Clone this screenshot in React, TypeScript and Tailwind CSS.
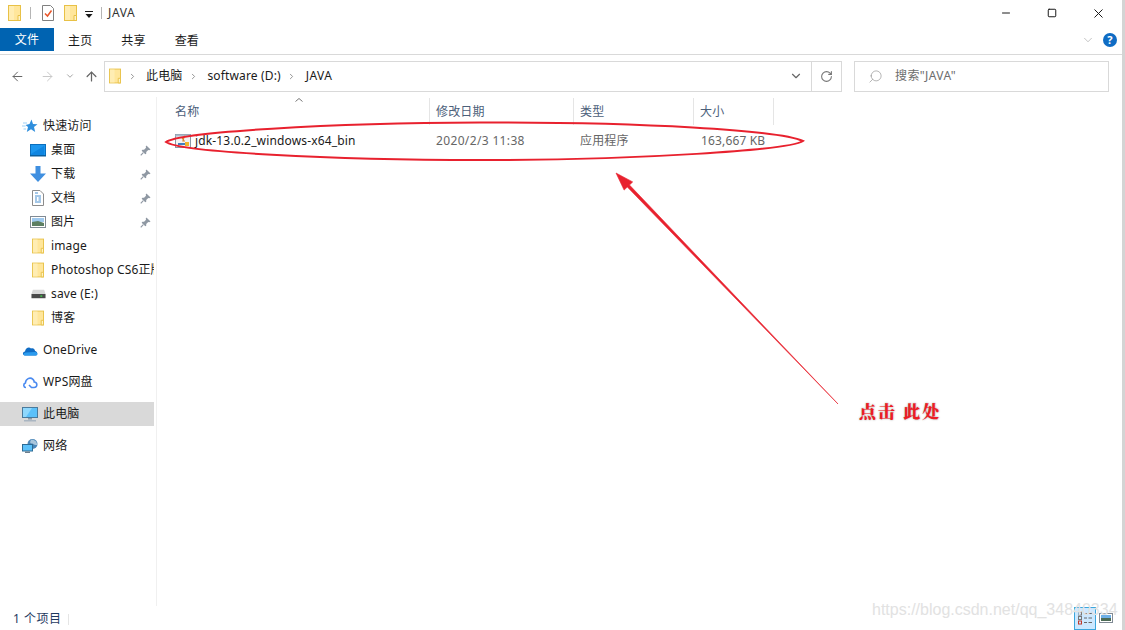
import React from "react";
import { ArrowLeft, ArrowRight, ArrowUp, ChevronDown, ChevronRight, RotateCw, Search, Minus, X, Square } from "lucide-react";

function Folder({ className = "w-[13px] h-[16px]" }: { className?: string }) {
  return (
    <svg viewBox="0 0 13 16" className={className}>
      <rect x="0.5" y="0.5" width="12" height="15" fill="#ffe69b" stroke="#e8c146" />
      <rect x="1" y="1" width="5" height="14" fill="#ffedb3" />
      <path d="M10 15.5V10.5H12.5V15.5Z" fill="#fff3c6" stroke="#e8c146" />
    </svg>
  );
}

function Pin() {
  return (
    <svg viewBox="0 0 12 12" className="w-[11px] h-[11px]">
      <path d="M7 0.5 11.5 5 10 5.8 9 5.4 6.8 7.6 6.8 9.6 5.8 10.2 1.8 6.2 2.6 5.2 4.4 5.2 6.6 3 6.2 2Z" fill="#8f98a3" />
      <path d="M3.6 8.4 0.8 11.2" stroke="#8f98a3" strokeWidth="1.2" />
    </svg>
  );
}

function Crumb() {
  return (
    <span className="w-[4px] flex justify-center">
      <ChevronRight size={9} strokeWidth={2.4} className="shrink-0 text-[#8a8a8a]" />
    </span>
  );
}

const iconBox = "w-[16px] h-[16px]";

const icons: Record<string, React.ReactNode> = {
  star: (
    <svg viewBox="0 0 16 16" className={iconBox}>
      <path d="M9.5 1.5 11 6 15.5 6.2 12 9 13.2 14 9 11.2 4.8 14 6 9 3.5 7 7.5 6Z" fill="#2f8fdd" />
      <path d="M1 5H5M0 8H3.5M1.5 11H4" stroke="#9ccff5" strokeWidth="1" />
    </svg>
  ),
  desktop: (
    <svg viewBox="0 0 16 13" className="w-[16px] h-[13px]">
      <rect x="0.5" y="0.5" width="15" height="11" fill="#1c96ee" stroke="#0b6fbd" />
      <path d="M1 11V10L14 2V11Z" fill="#0f85e0" />
      <rect x="0" y="11" width="16" height="1.5" fill="#0b5f9e" />
    </svg>
  ),
  download: (
    <svg viewBox="0 0 16 16" className={iconBox}>
      <path d="M5.5 0H10.5V7.5H16L8 16 0 7.5H5.5Z" fill="#3f8fe0" />
    </svg>
  ),
  doc: (
    <svg viewBox="0 0 12 16" className="w-[12px] h-[16px]">
      <path d="M0.5 0.5H8L11.5 4V15.5H0.5Z" fill="#fff" stroke="#8c8c8c" />
      <path d="M3 3H6M3 6H9M3 8H5M6.5 8H9M3 10H5M6.5 10H9M3 12H9" stroke="#4a90d0" strokeWidth="1" />
    </svg>
  ),
  picture: (
    <svg viewBox="0 0 16 12" className="w-[16px] h-[12px]">
      <rect x="0.5" y="0.5" width="15" height="11" fill="#fff" stroke="#808a94" />
      <rect x="2" y="2" width="12" height="4" fill="#9fc9ee" />
      <path d="M2 6 8 5 14 7V10H2Z" fill="#5d7f62" />
    </svg>
  ),
  drive: (
    <svg viewBox="0 0 16 10" className="w-[15px] h-[10px]">
      <path d="M2 0.5H14L15.5 5H0.5Z" fill="#d8d8d8" />
      <rect x="0.5" y="5" width="15" height="4.5" fill="#4a4a4a" />
      <rect x="10" y="6.5" width="2" height="1.5" fill="#3fd24a" />
    </svg>
  ),
  onedrive: (
    <svg viewBox="0 0 16 11" className="w-[16px] h-[11px]">
      <path d="M3 10.5C0.5 10.5 0 7 3 6.5 3.5 3 7 1.5 9 3.5 11.5 2.5 13 4.5 13 6 15.5 6 16.5 10.5 13.5 10.5Z" fill="#0f6cc4" />
      <path d="M3 10.5C1 10.5 1 8 4 7.5L13 7C15.5 7 16.5 10.5 13.5 10.5Z" fill="#2b9bee" />
    </svg>
  ),
  wps: (
    <svg viewBox="0 0 16 13" className="w-[16px] h-[13px]" fill="none">
      <path d="M4 11.5C1.5 11.5 0.8 8 3.4 7 3.6 3 8 0.6 11 3.4 12 4.4 12.2 5.5 12.2 6 15.5 6.2 16 11.5 12 11.5H9.5L7 9" stroke="#4a8af0" strokeWidth="1.6" />
    </svg>
  ),
  pc: (
    <svg viewBox="0 0 16 15" className="w-[16px] h-[15px]">
      <rect x="0.5" y="0.5" width="15" height="10" fill="#5cc1fa" stroke="#4a7a9c" />
      <path d="M1 1H10L4 10H1Z" fill="#8fd8fd" />
      <rect x="6" y="11" width="4" height="1.5" fill="#8a9aa8" />
      <rect x="2" y="13" width="12" height="1.5" fill="#aab6c2" />
    </svg>
  ),
  network: (
    <svg viewBox="0 0 16 15" className="w-[16px] h-[15px]">
      <circle cx="10.5" cy="5" r="5" fill="#4a86b8" />
      <path d="M9 1C7.5 3 8 5 10.5 4.5 12 6 13 6 15 6 15.5 3 12 0 9 1Z" fill="#a9c6dc" />
      <rect x="0.5" y="5.5" width="10" height="6.5" fill="#5cc1fa" stroke="#2d6b94" />
      <rect x="3" y="12.5" width="5" height="1.5" fill="#6d7f8e" />
    </svg>
  ),
};

type NavItem = { label: string; icon: React.ReactNode; pin?: boolean; indent?: boolean; selected?: boolean };

const quick: NavItem[] = [
  { label: "快速访问", icon: icons.star },
  { label: "桌面", icon: icons.desktop, pin: true, indent: true },
  { label: "下载", icon: icons.download, pin: true, indent: true },
  { label: "文档", icon: icons.doc, pin: true, indent: true },
  { label: "图片", icon: icons.picture, pin: true, indent: true },
  { label: "image", icon: <Folder className="w-[12px] h-[16px]" />, indent: true },
  { label: "Photoshop CS6正版", icon: <Folder className="w-[12px] h-[16px]" />, indent: true },
  { label: "save (E:)", icon: icons.drive, indent: true },
  { label: "博客", icon: <Folder className="w-[12px] h-[16px]" />, indent: true },
];

const rest: NavItem[] = [
  { label: "OneDrive", icon: icons.onedrive },
  { label: "WPS网盘", icon: icons.wps },
  { label: "此电脑", icon: icons.pc, selected: true },
  { label: "网络", icon: icons.network },
];

function NavRow({ item }: { item: NavItem }) {
  return (
    <div className={`relative flex items-center h-6 overflow-hidden whitespace-nowrap ${item.selected ? "bg-[#d9d9d9]" : ""} ${item.indent ? "pl-[30px]" : "pl-[22px]"}`}>
      <span className="w-[16px] shrink-0 flex justify-center">{item.icon}</span>
      <span className="ml-[5px] text-[#1a1a1a]">{item.label}</span>
      {item.pin && (
        <span className="absolute left-[140px] top-[7px] flex">
          <Pin />
        </span>
      )}
    </div>
  );
}

function ColHead({ label, w }: { label: string; w: string }) {
  return (
    <div className={`${w} h-[27px] pl-[6px] flex items-center border-r border-[#e5e5e5] text-[#4c607a]`}>
      {label}
    </div>
  );
}

export default function App() {
  return (
    <div className="relative w-[1125px] h-[630px] overflow-hidden bg-white border-r-[3px] border-[#d4d4d4] text-[12px] tracking-[0.15px] font-['Noto_Sans','Noto_Sans_CJK_SC',sans-serif] flex flex-col">
      {/* title bar */}
      <div className="h-[26px] flex items-center pl-[8px] shrink-0">
        <Folder />
        <span className="ml-[9px] w-px h-[12px] bg-[#b5b5b5]" />
        <svg viewBox="0 0 12 16" className="ml-[11px] w-[12px] h-[16px]">
          <path d="M0.5 0.5H8.5L11.5 3.5V15.5H0.5Z" fill="#fff" stroke="#808080" />
          <path d="M3 8.5 5.5 11 9.5 5.5" fill="none" stroke="#e8562a" strokeWidth="1.5" />
        </svg>
        <span className="ml-[10px]"><Folder /></span>
        <svg viewBox="0 0 8 7" className="ml-[8px] mt-[3px] w-[8px] h-[7px]">
          <path d="M0 0H8V1H0Z M0.5 3H7.5L4 7Z" fill="#1a1a1a" />
        </svg>
        <span className="ml-[8px] w-px h-[12px] bg-[#b5b5b5]" />
        <span className="ml-[6px] text-[#333] tracking-[0.6px]">JAVA</span>
        <div className="ml-auto flex items-center text-[#1a1a1a]">
          <span className="w-[46px] flex justify-center"><Minus size={12} strokeWidth={1} absoluteStrokeWidth /></span>
          <span className="w-[46px] flex justify-center"><Square size={10} strokeWidth={1} absoluteStrokeWidth /></span>
          <span className="w-[46px] flex justify-center mr-[1px]"><X size={15} strokeWidth={1} absoluteStrokeWidth /></span>
        </div>
      </div>

      {/* ribbon tabs */}
      <div className="h-[29px] flex items-stretch shrink-0 border-b border-[#d9d9d9]">
        <div className="w-[54px] h-[23px] mt-[2px] pt-px bg-[#0063b1] text-white flex items-center justify-center">文件</div>
        <div className="flex h-[23px] mt-[3px] items-center gap-[29px] ml-[14px] text-[#1a1a1a]">
          <span>主页</span>
          <span>共享</span>
          <span>查看</span>
        </div>
        <div className="ml-auto flex h-[28px] items-center pr-[5px]">
          <ChevronDown size={14} strokeWidth={1} className="text-[#9a9a9a] mr-[8px]" />
          <span className="w-[14px] h-[14px] rounded-full bg-[#0f6cc4] text-white text-[11px] font-bold flex items-center justify-center">?</span>
        </div>
      </div>

      {/* address row */}
      <div className="h-[42px] flex items-center shrink-0 pl-[10px] pr-[13px]">
        <ArrowLeft size={15} strokeWidth={1.6} className="text-[#666]" />
        <ArrowRight size={15} strokeWidth={1.6} className="ml-[15px] text-[#c9c9c9]" />
        <ChevronDown size={10} strokeWidth={1.6} className="ml-[10px] text-[#777]" />
        <ArrowUp size={15} strokeWidth={2} className="ml-[9px] text-[#666]" />
        <div className="ml-[5px] w-[738px] h-[31px] border border-[#d9d9d9] flex items-center">
          <span className="ml-[4px]"><Folder className="w-[12px] h-[16px]" /></span>
          <span className="ml-[9px]"><Crumb /></span>
          <span className="ml-[12px] text-[#1a1a1a]">此电脑</span>
          <span className="ml-[9px]"><Crumb /></span>
          <span className="ml-[12px] text-[#1a1a1a]">software (D:)</span>
          <span className="ml-[9px]"><Crumb /></span>
          <span className="ml-[12px] text-[#1a1a1a] tracking-[0.4px]">JAVA</span>
          <ChevronDown size={14} strokeWidth={2} className="ml-auto mr-[8px] text-[#666]" />
          <span className="w-[30px] h-full border-l border-[#d9d9d9] flex items-center justify-center">
            <RotateCw size={13} strokeWidth={2} className="text-[#777]" />
          </span>
        </div>
        <div className="ml-auto w-[255px] h-[31px] border border-[#d9d9d9] flex items-center pl-[13px]">
          <Search size={15} strokeWidth={1} className="text-[#8a8a8a] -scale-x-100" />
          <span className="ml-[12px] text-[#6d6d6d] tracking-[0.4px]">搜索"JAVA"</span>
        </div>
      </div>

      {/* content */}
      <div className="flex-1 flex min-h-0">
        <aside className="w-[157px] shrink-0 border-r border-[#f0f0f0] pt-[17px] pr-[2px]">
          {quick.map((item) => (
            <NavRow key={item.label} item={item} />
          ))}
          <div className="mt-[8px] flex flex-col gap-[8px]">
            {rest.map((item) => (
              <NavRow key={item.label} item={item} />
            ))}
          </div>
        </aside>
        <main className="flex-1 min-w-0 pt-px">
          <div className="relative flex pl-[12px]">
            <ColHead label="名称" w="w-[261px]" />
            <ColHead label="修改日期" w="w-[144px]" />
            <ColHead label="类型" w="w-[120px]" />
            <ColHead label="大小" w="w-[80px]" />
            <svg viewBox="0 0 8 4" className="absolute left-[138px] top-0 w-[8px] h-[4px]" fill="none">
              <path d="M0.5 3.5 4 0.5 7.5 3.5" stroke="#777" />
            </svg>
          </div>
          <div className="flex items-center h-[24px] mt-[4px] pl-[18px] text-[#666]">
            <svg viewBox="0 0 16 16" className="w-[16px] h-[16px] shrink-0">
              <rect x="0.5" y="1.5" width="15" height="13" fill="#f3f3f3" stroke="#8a97a5" />
              <rect x="0.5" y="1.5" width="15" height="2" fill="#a9bccd" />
              <path d="M7 6 9 4 8 8 10 8" fill="none" stroke="#d9822b" strokeWidth="1.2" />
              <rect x="3" y="10" width="9" height="2" fill="#3f7fbf" />
              <rect x="10" y="9" width="4" height="4" fill="#f0b429" />
            </svg>
            <span className="w-[241px] ml-[4px] text-[#1a1a1a] whitespace-nowrap">jdk-13.0.2_windows-x64_bin</span>
            <span className="w-[144px] tracking-[0.35px]">2020/2/3 11:38</span>
            <span className="w-[121px]">应用程序</span>
            <span>163,667 KB</span>
          </div>
        </main>
      </div>

      {/* status bar */}
      <div className="h-[24px] shrink-0 flex items-center pl-[13px] text-[#1f3a5f]">
        <span className="pt-[2px] tracking-[0.5px]">1 个项目</span>
        <span className="ml-[7px] mt-[2px] w-px h-[11px] bg-[#e5e5e5]" />
        <div className="ml-auto flex items-center pr-[9px]">
          <span className="w-[22px] h-[23px] bg-[#cce8ff] border border-[#3ca6dd] flex items-center justify-center">
            <svg viewBox="0 0 14 14" className="w-[14px] h-[14px]" fill="none">
              <rect x="0.5" y="1" width="3" height="3" stroke="#777" />
              <rect x="0.5" y="5.5" width="3" height="3" stroke="#777" />
              <rect x="0.5" y="10" width="3" height="3" stroke="#c0392b" />
              <path d="M6 2.5H9M10.5 2.5H14M6 7H9M10.5 7H14M6 11.5H9M10.5 11.5H14" stroke="#666" />
            </svg>
          </span>
          <svg viewBox="0 0 14 10" className="ml-[3px] w-[14px] h-[10px]">
            <rect x="0.5" y="0.5" width="13" height="9" fill="#fff" stroke="#808a94" />
            <rect x="2" y="2" width="10" height="3" fill="#6fb0e6" />
            <rect x="2" y="5" width="10" height="3" fill="#4d6b55" />
          </svg>
        </div>
      </div>

      {/* annotation marks on top of the screenshot */}
      <svg viewBox="0 0 1125 630" className="absolute inset-0 w-[1125px] h-[630px] pointer-events-none" fill="none">
        <path d="M166 142C180 132 330 123 480 122.5 640 122 780 130 803 141 790 150 640 160 480 160 330 160 180 152 166 142Z" stroke="#e8212e" strokeWidth="2" />
        <path d="M838 404 629.5 185 632.7 181.9 616 173 624.1 190.1 627.3 187Z" fill="#e8212e" stroke="#e8212e" strokeWidth="0.6" />
      </svg>

      <div className="absolute left-[859px] top-[401px] font-['Noto_Serif_CJK_SC','Noto_Sans_CJK_SC',serif] font-black text-[17px] leading-[20px] tracking-[2px] text-[#ee1c25] [text-shadow:0_0_2px_#999] whitespace-nowrap">
        点击 此处
      </div>
      <div className="absolute left-[872px] top-[600px] font-['Liberation_Sans',sans-serif] text-[16px] leading-[20px] tracking-normal text-[#e2e2e2] whitespace-nowrap">
        https://blog.csdn.net/qq_34840334
      </div>
    </div>
  );
}
